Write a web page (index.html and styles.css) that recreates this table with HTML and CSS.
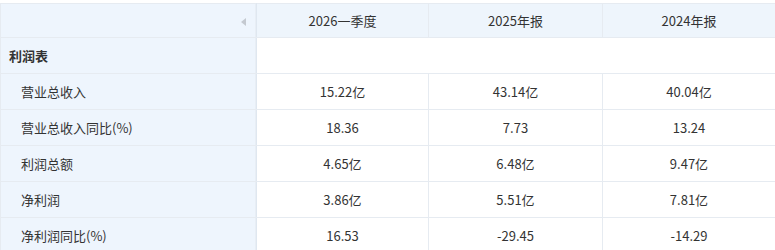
FILE: index.html
```html
<!DOCTYPE html>
<html lang="zh">
<head>
<meta charset="utf-8">
<link rel="stylesheet" href="styles.css">
</head>
<body>
<div class="wrap">
<table class="fin">
  <colgroup>
    <col class="c0"><col class="c1"><col class="c2"><col class="c3">
  </colgroup>
  <thead>
    <tr>
      <th class="first"><span class="arrow"></span></th>
      <th>2026一季度</th>
      <th>2025年报</th>
      <th>2024年报</th>
    </tr>
  </thead>
  <tbody>
    <tr class="section"><td class="first title">利润表</td><td colspan="3"></td></tr>
    <tr><td class="first">营业总收入</td><td>15.22亿</td><td>43.14亿</td><td>40.04亿</td></tr>
    <tr><td class="first">营业总收入同比(%)</td><td>18.36</td><td>7.73</td><td>13.24</td></tr>
    <tr><td class="first">利润总额</td><td>4.65亿</td><td>6.48亿</td><td>9.47亿</td></tr>
    <tr><td class="first">净利润</td><td>3.86亿</td><td>5.51亿</td><td>7.81亿</td></tr>
    <tr><td class="first">净利润同比(%)</td><td>16.53</td><td>-29.45</td><td>-14.29</td></tr>
  </tbody>
</table>
</div>
</body>
</html>
```
FILE: styles.css
```css
html, body { margin: 0; padding: 0; background: #fff; }
body {
  font-family: "Noto Sans CJK SC", "Noto Sans", sans-serif;
  font-size: 13px;
  color: #333;
}
.wrap { padding-top: 3px; }
.fin {
  border-collapse: collapse;
  table-layout: fixed;
  width: 775px;
}
.c0 { width: 256px; }
.c1 { width: 172px; }
.c2 { width: 174px; }
.c3 { width: 173px; }
.fin th, .fin td {
  border: 1px solid #e6ebf1;
  text-align: center;
  height: 35px;
  padding: 0;
  font-weight: normal;
}
.fin thead th {
  background: #eef5fc;
  height: 33px;
}
.fin td.first, .fin th.first {
  background: #eef5fd;
  text-align: left;
  padding-left: 20px;
  border-right: 1px solid #dfe7f0;
  box-shadow: inset -5px 0 0 -4px #e8eef5;
}
.fin th.first { text-align: right; padding-right: 10px; }
.fin td.title { padding-left: 8px; font-weight: 600; }
.fin .section td { background: #fff; }
.fin .section td.first { background: #eef5fd; }
.arrow {
  display: inline-block;
  width: 0; height: 0;
  border-top: 4px solid transparent;
  border-bottom: 4px solid transparent;
  border-right: 5px solid #c4c9d0;
  vertical-align: middle;
}
```
